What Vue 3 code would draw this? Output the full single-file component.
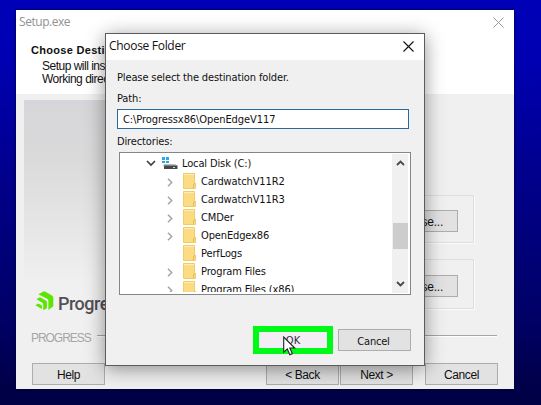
<script setup>
const folders = [
  { name: 'CardwatchV11R2', open: true },
  { name: 'CardwatchV11R3', open: true },
  { name: 'CMDer', open: true },
  { name: 'OpenEdgex86', open: true },
  { name: 'PerfLogs', open: false },
  { name: 'Program Files', open: true },
  { name: 'Program Files (x86)', open: true },
]
</script>

<template>
  <main class="desktop">
    <section class="setup">
      <header class="setup-head">
        <div class="setup-title">
          <span class="exe">Setup.exe</span>
          <svg class="close" width="11" height="11" viewBox="0 0 11 11"><path d="M.5 .5 10.5 10.5M10.5 .5 .5 10.5" stroke="#999" fill="none" /></svg>
        </div>
        <h1>Choose Desti</h1>
        <p class="ms l1">Setup will inst</p>
        <p class="ms l2">Working direc</p>
      </header>
      <div class="setup-body">
        <aside class="banner">
          <div class="logo">
            <svg width="19" height="20" viewBox="0 0 19 20">
              <path d="M3.300 3.200 8.500 .5Q9.200 .2 10 .6L17.300 4.800Q18.300 5.400 18.300 6.500V15.300L13.400 19V9.500Q13.400 8.500 12.500 8Z" fill="#5ce500" />
              <path d="M1.300 8 5 6.200 10.800 9.500Q11.900 10.200 11.900 11.300V17.200L8.200 19.200V13.500Q8.200 12.400 7.300 11.800Z" fill="#5ce500" />
              <path d="M.3 14.300 3.300 12.500 7 14.500V18Z" fill="#5ce500" />
            </svg>
            <span>Progre</span>
          </div>
        </aside>
        <div class="groups">
          <div class="group g1"><button class="btn browse">Browse...</button></div>
          <div class="group g2"><button class="btn browse">Browse...</button></div>
        </div>
      </div>
      <div class="rule"><span>PROGRESS</span><i></i></div>
      <footer class="setup-foot ms">
        <button class="btn help">Help</button>
        <button class="btn">&lt; Back</button>
        <button class="btn next">Next &gt;</button>
        <button class="btn">Cancel</button>
      </footer>
    </section>

    <section class="dialog">
      <header class="dlg-title">
        <span>Choose Folder</span>
        <svg width="11" height="11" viewBox="0 0 11 11"><path d="M.5 .5 10.5 10.5M10.5 .5 .5 10.5" stroke="#111" stroke-width="1.1" fill="none" /></svg>
      </header>
      <p class="prompt">Please select the destination folder.</p>
      <p class="path-label">Path:</p>
      <div class="path"><span>C:\Progressx86\OpenEdgeV117</span></div>
      <p class="dir-label">Directories:</p>
      <div class="tree">
        <div class="rows">
          <div class="row root">
            <svg class="chev" width="10" height="7" viewBox="0 0 10 7"><path d="M1 1 5 5 9 1" fill="none" stroke="#404040" stroke-width="1.7" /></svg>
            <svg class="disk" width="16" height="14" viewBox="0 0 16 14">
              <path d="M0 1H3V4H0ZM4 1H7V4H4ZM0 5H3V7H0ZM4 5H7V7H4Z" fill="#27a9e8" />
              <path d="M2 8H13L15.500 10H1Z" fill="#b9bdc0" />
              <path d="M2 9.500H15.500V13H2Z" fill="#45484b" />
              <path d="M11 11H13V12H11Z" fill="#bfe8c0" />
            </svg>
            <span class="root-name">Local Disk (C:)</span>
          </div>
          <div v-for="f in folders" :key="f.name" class="row">
            <span class="arrow"><svg v-if="f.open" width="6" height="9" viewBox="0 0 6 9"><path d="M1 .8 4.700 4.500 1 8.200" fill="none" stroke="#aaa0ae" stroke-width="1.500" /></svg></span>
            <svg class="folder" width="13" height="16" viewBox="0 0 13 16">
              <path d="M.5 .5H11.500V10.500H12.500V15.500H.5Z" fill="#fbdc83" stroke="#efcb69" />
              <path d="M1 1.500H11" stroke="#ffedb8" />
              <path d="M10.500 15V11.500L12.500 10.500" fill="none" stroke="#e3bd5c" />
            </svg>
            <span>{{ f.name }}</span>
          </div>
        </div>
        <div class="scroll">
          <svg width="9" height="6" viewBox="0 0 9 6"><path d="M1 5 4.500 1.500 8 5" fill="none" stroke="#484848" stroke-width="1.800" /></svg>
          <i class="thumb"></i>
          <svg width="9" height="6" viewBox="0 0 9 6"><path d="M1 1 4.500 4.500 8 1" fill="none" stroke="#484848" stroke-width="1.800" /></svg>
        </div>
      </div>
      <footer class="dlg-foot">
        <button class="ok">OK</button>
        <button class="btn dlg-cancel">Cancel</button>
      </footer>
    </section>

    <svg class="cursor" width="13" height="20" viewBox="0 0 13 20"><path d="M.7 1V16.200L4.300 12.900 6.800 18.700 9.300 17.600 6.800 12H11.700Z" fill="#fff" stroke="#222" stroke-width="1.100" /></svg>
  </main>
</template>

<style>
body { margin: 0; overflow: hidden; }
</style>

<style scoped>
* { box-sizing: border-box; }
p, h1 { margin: 0; white-space: nowrap; }
svg { display: block; flex: none; }
span { white-space: nowrap; }
.desktop {
  position: relative; width: 541px; height: 405px; overflow: hidden;
  background: linear-gradient(#0000b8 0, #0000b2 15%, #000090 40%, #000064 80%, #000048 96%, #000045);
  font-family: "DejaVu Sans Condensed", "DejaVu Sans", sans-serif; color: #111;
}
.ms { font-family: "Liberation Sans", sans-serif; }
.setup {
  position: absolute; left: 16px; top: 10px; width: 498px; height: 379px;
  background: #f0f0f0; display: flex; flex-direction: column; overflow: hidden;
  box-shadow: 0 0 3px #000030;
}
.setup-head { height: 84px; background: #fff; flex: none; }
.setup-title { display: flex; justify-content: space-between; align-items: center; height: 24px; padding: 0 10px 0 3px; }
.exe { font: 12px/16px "Open Sans", sans-serif; color: #929292; letter-spacing: -.45px; }
h1 { font: bold 11px/14px "Liberation Sans", sans-serif; letter-spacing: .3px; padding: 9px 0 0 15px; color: #111; }
.l1, .l2 { font-size: 12px; line-height: 13px; padding-left: 26px; letter-spacing: -.5px; }
.l1 { padding-top: 3px; }
.setup-body { display: flex; height: 236px; padding: 6px 0 0 8px; justify-content: space-between; flex: none; }
.banner { width: 150px; background: linear-gradient(#d6d6da, #dadada 25%, #e4e4e4 50%, #f0f0f0 80%); }
.logo { display: flex; align-items: flex-start; padding: 191px 0 0 11px; }
.logo span { font: 500 18px/24px Roboto, sans-serif; letter-spacing: -.5px; color: #505055; margin: 1px 0 0 4px; }
.groups { padding-top: 95px; width: 200px; margin-right: 40px; }
.group { border: 1px solid #dedede; display: flex; justify-content: flex-end; padding: 14px 15px 0 0; height: 48px; box-shadow: 1px 1px #fafafa; }
.g2 { margin-top: 16px; height: 50px; padding-top: 15px; }
.btn { background: #e2e2e2; border: 1px solid #adadad; padding: 1px 0 0; height: 22px; width: 73px; font-size: 12px; line-height: 18px; letter-spacing: -.4px; font-family: inherit; color: #111; }
.browse { font-family: "Liberation Sans", sans-serif; letter-spacing: -.2px; padding-right: 5px; }
.rule { display: flex; align-items: center; height: 14px; margin: 1px 17px 0 15px; flex: none; }
.rule span { font: 12px/14px "Liberation Sans", sans-serif; color: #a6a6a6; letter-spacing: -1.05px; width: 66px; }
.rule i { flex: 1; border-top: 1px solid #a5a5a5; border-bottom: 1px solid #fff; height: 2px; margin-top: -4px; }
.setup-foot { display: flex; padding: 18px 0 0 16px; }
.help { margin-right: 161px; }
.next { margin: 0 12px 0 1px; }
.dialog {
  position: absolute; left: 105px; top: 33px; width: 320px; height: 333px;
  background: #f0f0f0; border: 1px solid #5c5c5c; display: flex; flex-direction: column;
  box-shadow: 0 3px 18px rgba(0, 0, 0, .42); font-size: 11px; line-height: 14px; letter-spacing: -.13px;
}
.dlg-title { height: 26px; background: #fff; display: flex; align-items: center; justify-content: space-between; padding: 0 10px 2px 3px; flex: none; font: 12px/16px "Open Sans", sans-serif; letter-spacing: -.3px; }
.prompt { padding: 11px 0 0 11px; }
.path-label { padding: 7px 0 0 11px; }
.path { width: 292px; height: 20px; margin: 3px 0 0 11px; border: 1px solid #28699f; background: #fff; padding: 3px 5px; flex: none; letter-spacing: -.08px; }
.dir-label { padding: 6px 0 0 11px; }
.tree { width: 292px; height: 143px; margin: 3px 0 0 13px; border: 1px solid #82878c; background: #fff; display: flex; justify-content: space-between; overflow: hidden; flex: none; }
.rows { padding-top: 1px; height: 139px; overflow: hidden; }
.row { display: flex; align-items: center; height: 18px; padding-left: 47px; }
.row span { padding-top: 2px; }
.root { padding-left: 26px; }
.disk { margin: 0 4px 0 6px; }
.row .arrow { width: 16px; display: block; padding-top: 2px; }
.folder { margin-right: 5px; }
.scroll { width: 16px; margin: 1px 2px 1px 0; background: #f0f0f0; display: flex; flex-direction: column; align-items: center; padding: 6px 0; }
.thumb { width: 15px; height: 27px; background: #cdcdcd; margin: 57px 0 32px; }
.dlg-foot { display: flex; align-items: center; padding: 31px 0 0 147px; }
.ok { width: 80px; height: 28px; border: 6px solid #00fa18; background: #f3eef5; padding: 2px 0 0; font: 11px/14px "DejaVu Sans Condensed", sans-serif; color: #332c44; }
.dlg-cancel { font-size: 11px; margin-left: 5px; padding: 3px 2px 0 0; letter-spacing: -.2px; }
.cursor { position: absolute; left: 283px; top: 336px; }
</style>
